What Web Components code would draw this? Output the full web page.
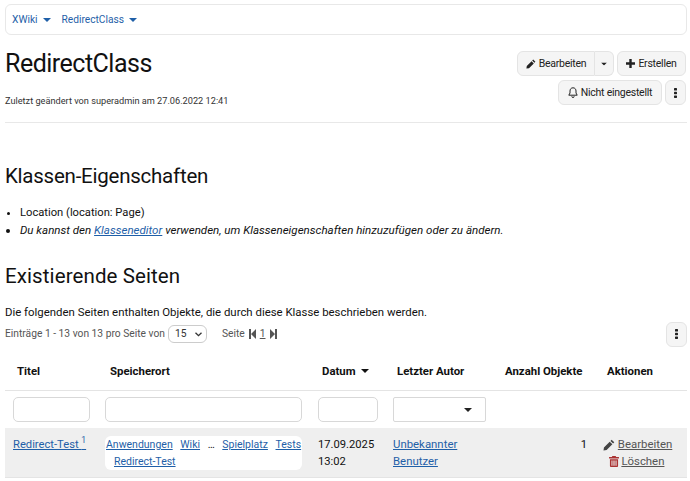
<!DOCTYPE html>
<html lang="de"><head><meta charset="utf-8"><title>RedirectClass</title>
<style>
html,body{margin:0;background:#fff;height:481px;overflow:hidden}
body{font:11.4px/17.5px Roboto,"Liberation Sans",sans-serif;color:#111}
</style></head><body>
<x-page></x-page>
<template id="t-btn"><style>
:host{display:inline-flex;box-sizing:border-box;height:25px;align-items:center;justify-content:center;gap:3px;padding:0 6px;background:#f5f5f5;border:1px solid #e4e4e4;border-radius:6px;font-size:10.5px;letter-spacing:-.25px;color:#222;white-space:nowrap}
</style><slot></slot></template>
<script>
const ICONS={
caret:'<svg width="8" height="4" viewBox="0 0 8 4"><path d="M0 0h8L4 4z" fill="currentColor"/></svg>',
pencil:'<svg width="10" height="10" viewBox="0 0 10 10"><path d="M7.2.6l2.2 2.2-1 1L6.200 1.600zM5.600 2.200l2.200 2.200L3 9.200.4 9.600.8 7z" fill="currentColor"/></svg>',
pencilL:'<svg width="12" height="12" viewBox="0 0 10 10"><path d="M7.2.6l2.2 2.2-1 1L6.200 1.600zM5.600 2.200l2.200 2.200L3 9.200.4 9.600.8 7z" fill="currentColor"/></svg>',
plus:'<svg width="9" height="9" viewBox="0 0 9 9"><path d="M3.300 0h2.400v3.300H9v2.400H5.700V9H3.300V5.700H0V3.300h3.300z" fill="currentColor"/></svg>',
bell:'<svg width="10" height="11" viewBox="0 0 10 11"><path d="M5 .8C3 .8 2 2.300 2 4v2L.8 8.200h8.400L8 6V4C8 2.300 7 .8 5 .8zM3.800 9.300a1.200 1.200 0 0 0 2.400 0" fill="none" stroke="currentColor" stroke-width="1"/></svg>',
dots:'<svg width="3" height="10" viewBox="0 0 3 10"><g fill="currentColor"><rect y="0" width="3" height="2.500" rx=".6"/><rect y="3.700" width="3" height="2.500" rx=".6"/><rect y="7.400" width="3" height="2.500" rx=".6"/></g></svg>',
first:'<svg width="7" height="10" viewBox="0 0 7 10"><path d="M0 0h2v10H0zM7 0v10L2 5z" fill="currentColor"/></svg>',
last:'<svg width="7" height="10" viewBox="0 0 7 10"><path d="M7 0H5v10h2zM0 0v10l5-5z" fill="currentColor"/></svg>',
trash:'<svg width="10" height="11" viewBox="0 0 9 10"><path d="M3 0h3l.5 1H9v1.200H0V1h2.500zM.8 3h7.400v6.200c0 .5-.3.800-.8.800H1.600c-.5 0-.8-.3-.8-.8zM2.200 4v4.800h.9V4zM4 4v4.800h1V4zM5.900 4v4.800h.9V4z" fill="currentColor"/></svg>'
};
class XBtn extends HTMLElement{constructor(){super();this.attachShadow({mode:'open'}).append(document.getElementById('t-btn').content.cloneNode(true))}}
customElements.define('x-btn',XBtn);
class XIcon extends HTMLElement{constructor(){super();this.attachShadow({mode:'open'})}
connectedCallback(){this.shadowRoot.innerHTML='<style>:host{display:inline-flex;vertical-align:middle}</style>'+ICONS[this.getAttribute('name')]}}
customElements.define('x-icon',XIcon);
class XCrumbs extends HTMLElement{constructor(){super();this.attachShadow({mode:'open'}).innerHTML=`<style>
:host{display:flex;box-sizing:border-box;height:31px;margin-top:4px;align-items:center;gap:11px;padding:0 6px;border:1px solid #e8e8e8;border-radius:6px;font-size:10.2px;color:#1f5fa8}
span{display:inline-flex;align-items:center;gap:5px}
</style><span>XWiki <x-icon name="caret"></x-icon></span><span>RedirectClass <x-icon name="caret"></x-icon></span>`}}
customElements.define('x-crumbs',XCrumbs);
class XHeader extends HTMLElement{constructor(){super();this.attachShadow({mode:'open'}).innerHTML=`<style>
:host{display:flex;justify-content:space-between;box-sizing:border-box;height:88px;border-bottom:1px solid #e8e8e8;padding-top:16px}
h1{margin:0;font:400 25px/26px Roboto,sans-serif;letter-spacing:-.5px;color:#111}
.meta{font-size:9.200px;margin-top:17px;color:#333;line-height:14px}
.acts{display:flex;flex-direction:column;align-items:flex-end;gap:4px;padding-right:1px}
.row{display:flex;gap:3px}
.split{display:flex}
.split x-btn:first-child{border-radius:6px 0 0 6px;width:78px}
.split x-btn:last-child{border-radius:0 6px 6px 0;border-left:0;width:19px;padding:0}
</style><div><h1>RedirectClass</h1><div class="meta">Zuletzt geändert von superadmin am 27.06.2022 12:41</div></div>
<div class="acts"><div class="row"><div class="split"><x-btn><x-icon name="pencil"></x-icon>Bearbeiten</x-btn><x-btn><x-icon name="caret" style="transform:scale(.75)"></x-icon></x-btn></div><x-btn style="width:69px"><x-icon name="plus"></x-icon>Erstellen</x-btn></div>
<div class="row"><x-btn style="width:104px"><x-icon name="bell"></x-icon>Nicht eingestellt</x-btn><x-btn style="width:21px;padding:0"><x-icon name="dots"></x-icon></x-btn></div></div>`}}
customElements.define('x-header',XHeader);
class XTable extends HTMLElement{constructor(){super();this.attachShadow({mode:'open'}).innerHTML=`<style>
:host{display:block}
table{border-collapse:collapse;table-layout:fixed;width:682px;font-size:11.2px}
th{font-weight:700;text-align:left;padding:6px 11px 0 12px;height:44px;box-sizing:border-box;border-bottom:1px solid #e4e4e4;font-size:11.400px;vertical-align:middle;white-space:nowrap}
th.n{padding-left:11px}
.f td{padding:6px 8px;height:37px;box-sizing:border-box}
.f td.n{padding-left:7px}
.f div{box-sizing:border-box;height:25px;border:1px solid #d8d8d8;border-radius:5px;background:#fff}
.sel{display:flex;align-items:center;justify-content:flex-end;padding-right:13px;border-radius:2px!important;color:#222}
.r td{background:#efefef;vertical-align:top;padding:8px 8px 0;line-height:17px;height:49px;box-sizing:border-box;border-bottom:1px solid #e4e4e4}
.r td.n{padding-left:7px}
a{color:#1f5fa8;text-decoration:underline}
sup{font-size:8.500px;line-height:0}
.path{background:#fff;border-radius:6px;height:34px;text-align:left;white-space:nowrap;padding-left:1px;font-size:10.500px}
.path a+a,.path span{margin-left:5px}
.path span+a{margin-left:5px}
.num{text-align:right}
.r td.act{text-align:center;white-space:nowrap;color:#444;padding:8px 17px 0 8px;font-size:11.400px}
.act a{color:#555}
.del{color:#a33}
.auth{font-size:11.400px}
</style><table><colgroup><col style="width:93px"><col style="width:212px"><col style="width:76px"><col style="width:108px"><col style="width:101px"><col style="width:92px"></colgroup>
<tr><th>Titel</th><th>Speicherort</th><th>Datum <x-icon name="caret" style="margin-left:3px"></x-icon></th><th class="n">Letzter Autor</th><th class="n">Anzahl Objekte</th><th>Aktionen</th></tr>
<tr class="f"><td><div></div></td><td class="n"><div></div></td><td><div></div></td><td class="n"><div class="sel"><x-icon name="caret"></x-icon></div></td><td></td><td></td></tr>
<tr class="r"><td><a>Redirect-Test <sup>1</sup></a></td><td class="n"><div class="path"><a>Anwendungen</a> <a>Wiki</a> <span>…</span> <a>Spielplatz</a> <a>Tests</a><br><a style="margin-left:8px">Redirect-Test</a></div></td><td>17.09.2025<br>13:02</td><td class="n auth"><a>Unbekannter<br>Benutzer</a></td><td class="num">1</td><td class="act"><x-icon name="pencilL"></x-icon> <a>Bearbeiten</a><br><x-icon name="trash" class="del"></x-icon> <a>Löschen</a></td></tr></table>`}}
customElements.define('x-table',XTable);
class XPage extends HTMLElement{constructor(){super();this.attachShadow({mode:'open'}).innerHTML=`<style>
:host{display:block;padding:0 3px 0 5px;font-size:11.400px}
h2{font:400 20.5px/24px Roboto,sans-serif;margin:0;color:#111}
ul{margin:0;padding:0 0 0 15px}
li{line-height:17.500px}
a{color:#1f5fa8;text-decoration:underline}
p{margin:0}
.pager{display:flex;align-items:center;justify-content:space-between;height:25px;font-size:10.250px;color:#555}
.pager>span{display:flex;align-items:center}
.box{box-sizing:border-box;width:39px;height:18px;border:1px solid #ccc;border-radius:6px;margin-left:3px;display:flex;align-items:center;justify-content:space-between;padding:0 4px 0 6px;color:#333}
.pg{margin-left:15px;display:flex;align-items:center;gap:4px}
</style>
<x-crumbs></x-crumbs><x-header></x-header>
<h2 style="margin-top:41px;letter-spacing:-.24px">Klassen-Eigenschaften</h2>
<ul style="margin-top:16px"><li style="font-size:11.200px">Location (location: Page)</li><li style="font-size:11.550px"><i>Du kannst den <a>Klasseneditor</a> verwenden, um Klasseneigenschaften hinzuzufügen oder zu ändern.</i></li></ul>
<h2 style="margin-top:25px;letter-spacing:.1px">Existierende Seiten</h2>
<p style="margin-top:16px">Die folgenden Seiten enthalten Objekte, die durch diese Klasse beschrieben werden.</p>
<div class="pager"><span>Einträge 1 - 13 von 13 pro Seite von <span class="box">15 <svg width="7" height="5" viewBox="0 0 7 5"><path d="M.5.700l3 3 3-3" fill="none" stroke="#333" stroke-width="1.300"/></svg></span><span class="pg">Seite <x-icon name="first"></x-icon><u>1</u><x-icon name="last"></x-icon></span></span><x-btn style="width:21px;padding:0"><x-icon name="dots"></x-icon></x-btn></div>
<x-table></x-table>`}}
customElements.define('x-page',XPage);
</script></body></html>
